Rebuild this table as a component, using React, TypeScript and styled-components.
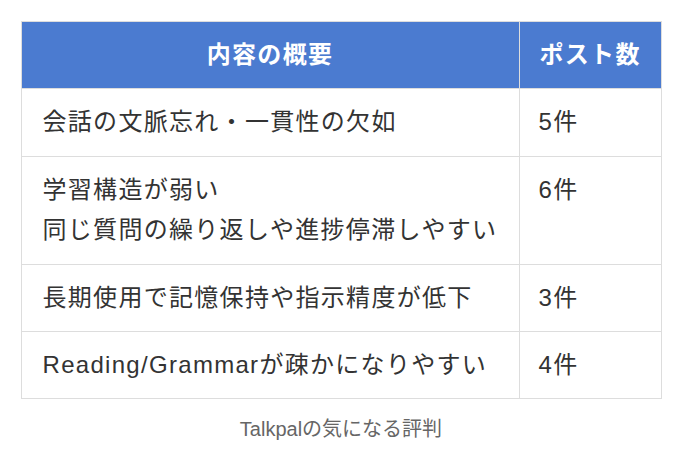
import styled, { createGlobalStyle } from 'styled-components';

const rows = [
  { lines: ['会話の文脈忘れ・一貫性の欠如'], count: '5件' },
  { lines: ['学習構造が弱い', '同じ質問の繰り返しや進捗停滞しやすい'], count: '6件' },
  { lines: ['長期使用で記憶保持や指示精度が低下'], count: '3件' },
  { lines: ['Reading/Grammarが疎かになりやすい'], count: '4件' },
];

const GlobalStyle = createGlobalStyle`
  body {
    margin: 0;
    background: #fff;
    font-family: "Liberation Sans", "Noto Sans CJK JP", sans-serif;
  }
`;

const App = () => {
  return (
    <>
      <GlobalStyle />
      <Wrapper>
        <Table>
          <thead>
            <tr>
              <HeadCell>内容の概要</HeadCell>
              <HeadCell $narrow>ポスト数</HeadCell>
            </tr>
          </thead>
          <tbody>
            {rows.map((row) => (
              <tr key={row.count}>
                <Cell>
                  {row.lines.map((line) => (
                    <Line key={line}>{line}</Line>
                  ))}
                </Cell>
                <Cell $narrow>{row.count}</Cell>
              </tr>
            ))}
          </tbody>
        </Table>
        <Caption>Talkpalの気になる評判</Caption>
      </Wrapper>
    </>
  );
};

export default App;

const Wrapper = styled.div`
  width: 641px;
  margin: 0 auto;
  padding-top: 21px;
`;

const Table = styled.table`
  width: 100%;
  border-collapse: collapse;
  table-layout: fixed;
  font-size: 24px;
  letter-spacing: 1.3px;
  line-height: 40.4px;
`;

const HeadCell = styled.th<{ $narrow?: boolean }>`
  width: ${({ $narrow }) => ($narrow ? '101px' : 'auto')};
  padding: 13px 20px;
  background: #4b7bd0;
  color: #fff;
  font-weight: bold;
  text-align: center;
  white-space: nowrap;
  border: 1px solid #dddddd;
`;

const Cell = styled.td<{ $narrow?: boolean }>`
  width: ${({ $narrow }) => ($narrow ? '101px' : 'auto')};
  padding: 13px 20px 13px ${({ $narrow }) => ($narrow ? '19px' : '21px')};
  color: #333;
  vertical-align: top;
  text-align: left;
  border: 1px solid #dddddd;
`;

const Line = styled.div`
  white-space: nowrap;
`;

const Caption = styled.p`
  margin: 14px 0 0;
  font-size: 20px;
  line-height: 32px;
  color: #666;
  text-align: center;
`;
